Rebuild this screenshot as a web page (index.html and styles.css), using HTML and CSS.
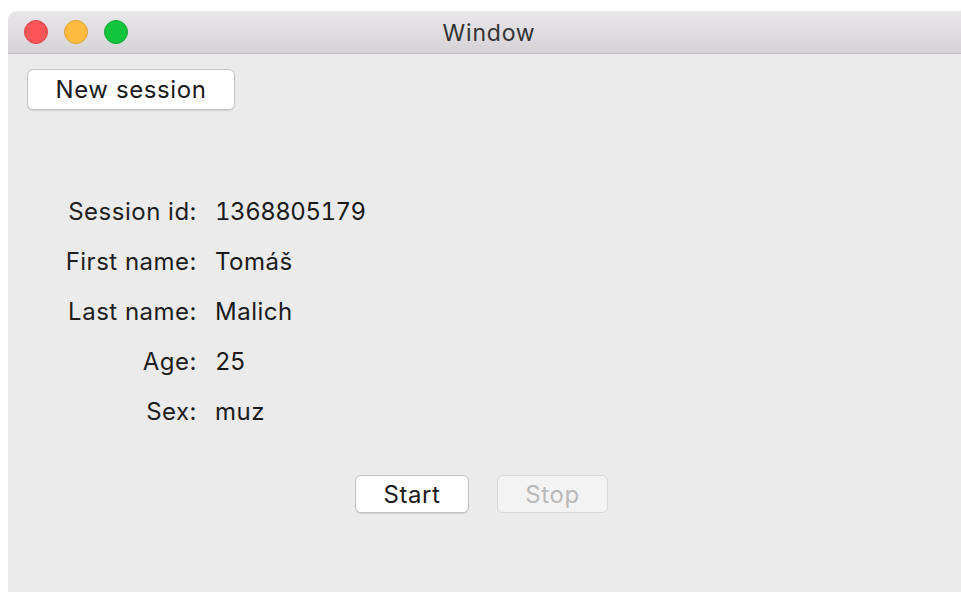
FILE: index.html
```html
<!DOCTYPE html>
<html lang="cs">
<head>
<meta charset="utf-8">
<title>Window</title>
<link rel="stylesheet" href="styles.css">
</head>
<body>
<div class="window">
  <div class="titlebar">
    <div class="lights">
      <span class="light close"></span>
      <span class="light minimize"></span>
      <span class="light zoom"></span>
    </div>
    <div class="title">Window</div>
  </div>
  <div class="content">
    <div class="toolbar">
      <button class="btn btn-new">New session</button>
    </div>
    <div class="details">
      <div class="label">Session id:</div><div class="value num">1368805179</div>
      <div class="label">First name:</div><div class="value">Tomáš</div>
      <div class="label">Last name:</div><div class="value">Malich</div>
      <div class="label">Age:</div><div class="value num">25</div>
      <div class="label">Sex:</div><div class="value">muz</div>
    </div>
    <div class="actions">
      <button class="btn btn-start">Start</button>
      <button class="btn btn-stop" disabled>Stop</button>
    </div>
  </div>
</div>
</body>
</html>
```
FILE: styles.css
```css
html, body {
  margin: 0;
  padding: 0;
  background: #ffffff;
}

body {
  padding: 11px 0 0 8px;
  font-family: "Inter", "Liberation Sans", sans-serif;
  color: #1e1e1e;
  overflow: hidden;
}

.window {
  width: 953px;
  height: 581px;
  background: #ebebeb;
  border-top-left-radius: 9px;
  overflow: hidden;
  display: flex;
  flex-direction: column;
}

.titlebar {
  height: 42px;
  flex: none;
  background: linear-gradient(#e9e7e9, #d4d2d4);
  border-bottom: 1px solid #bdbbbd;
  display: flex;
  align-items: center;
  position: relative;
}

.lights {
  display: flex;
  gap: 16px;
  padding-left: 16px;
}

.light {
  width: 24px;
  height: 24px;
  border-radius: 50%;
  box-sizing: border-box;
}

.light.close { background: #fd5557; border: 1px solid #e2454a; }
.light.minimize { background: #fdbc3e; border: 1px solid #df9f2f; }
.light.zoom { background: #11c53f; border: 1px solid #12a633; }

/* centred window title, laid over the bar */
.title {
  position: absolute;
  left: 0;
  right: 0;
  top: 2px;
  bottom: 0;
  padding-left: 9px;
  display: flex;
  align-items: center;
  justify-content: center;
  font-size: 23px;
  letter-spacing: 0.8px;
  color: #333333;
}

.content {
  flex: 1;
  display: flex;
  flex-direction: column;
}

.toolbar {
  padding: 15px 0 0 19px;
}

.btn {
  font-family: "Inter", "Liberation Sans", sans-serif;
  font-size: 24px;
  letter-spacing: 0.6px;
  color: #1a1a1a;
  background: #ffffff;
  border: 1px solid #c4c4c4;
  border-radius: 6px;
  box-shadow: 0 1px 1px rgba(0, 0, 0, 0.12);
  padding: 0;
  box-sizing: border-box;
}

.btn-new {
  width: 208px;
  height: 41px;
}

.details {
  margin-top: 76px;
  display: grid;
  grid-template-columns: 189px 1fr;
  column-gap: 18px;
  grid-auto-rows: 50px;
  align-items: center;
  font-size: 24px;
  letter-spacing: 0.5px;
}

.label {
  text-align: right;
  color: #1e1e1e;
}

.value {
  color: #1a1a1a;
}

.value.num {
  font-variant-numeric: tabular-nums;
  letter-spacing: -0.5px;
}

.actions {
  margin-top: 39px;
  display: flex;
  gap: 28px;
  padding-left: 347px;
}

.btn-start {
  width: 114px;
  height: 38px;
}

.btn-stop {
  width: 111px;
  height: 38px;
  background: #f3f3f3;
  color: #b9b9b9;
  border-color: #d9d9d9;
  box-shadow: none;
}
```
